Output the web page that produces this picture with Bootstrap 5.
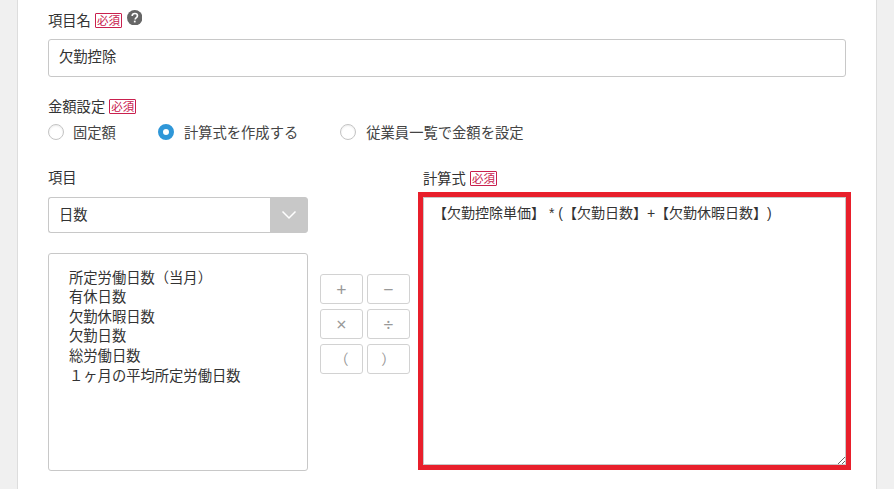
<!DOCTYPE html>
<html lang="ja">
<head>
<meta charset="utf-8">
<title>項目設定</title>
<link rel="stylesheet" href="https://cdn.jsdelivr.net/npm/bootstrap@5.3.0/dist/css/bootstrap.min.css">
<style>
html,body{height:489px;overflow:hidden}
body{background:#f0f0f0;font-family:"Noto Sans CJK JP","Noto Sans",sans-serif;font-size:14.3px;color:#333;line-height:1.4}
.sheet{margin:0 17px;height:489px;background:#fff;border-left:1px solid #ddd;border-right:1px solid #ddd;padding:10px 30px 0 30px;overflow:hidden}
.fld-label{font-size:14.3px;line-height:20px;margin:0;display:flex;align-items:center;gap:4px}
.req{border:1px solid #c9204e;color:#c9204e;font-size:11.5px;line-height:13px;padding:0 1px;border-radius:1px;height:15px;font-family:"Noto Sans CJK JP",serif}
.help{width:15.500px;height:15.500px;margin:-5px 0 0 1px;flex:none}
.name-input.form-control{height:38px;border:1px solid #c8c8c8;border-radius:3px;font-size:14.3px;color:#333;padding:0 10px 5px;margin-top:9px;box-shadow:none}
.amount{margin-top:19px}
.radios{display:flex;margin-top:6px;height:20px}
.radio-item{display:flex;align-items:center;margin:0;padding:0;color:#444}
.radio-item .form-check-input{width:16px;height:16px;margin:0 10px 0 0;border:1px solid #c4c4c4;float:none;flex:none;box-shadow:inset 0 1px 2px rgba(0,0,0,.08)}
.radio-item .form-check-input:checked{background:#fff;border:5px solid #2f97d8;box-shadow:none}
.radio-first .form-check-input{margin-right:9px}
.gap-a{margin-right:42px}
.gap-b{margin-right:42px}
.work{display:flex;margin-top:20px}
.left-col{width:260px;flex:none;padding-top:0}
.top-label{margin-top:5px}
.pick.input-group{margin-top:10px;width:260px;height:36px}
.pick .form-select{background-image:none;border:1px solid #c8c8c8;border-right:0;border-radius:3px 0 0 3px;font-size:14.3px;color:#333;padding:0 10px 2px;height:36px;box-shadow:none}
.pick .input-group-text{width:39px;padding:0;justify-content:center;background:#c8c8c8;border:1px solid #c8c8c8;border-radius:0 3px 3px 0}
.var-list{margin:20px 0 0;width:260px;height:218px;border:1px solid #c8c8c8;border-radius:3px;padding:12.700px 20px;list-style:none;line-height:19.6px;color:#333}
.ops{width:90px;flex:none;margin:112px 0 0 12px;display:grid;grid-template-columns:43px 43px;grid-auto-rows:30px;column-gap:4px;row-gap:5px;align-content:start}
.ops .btn{padding:0;border:1px solid #d2d2d2;border-radius:3px;background:#fff;color:#999;font-size:18px;line-height:1;font-family:"Noto Sans","Liberation Sans",sans-serif}
.ops .btn.paren{font-family:"Noto Sans CJK JP",sans-serif;font-size:14.3px}
.right-col{width:433px;flex:none;margin-left:8px;margin-top:6px}
.right-col .fld-label{padding-left:5px;margin-top:0}
.formula.form-control{display:block;width:433px;height:278px;margin-top:4px;border:5px solid #e81f2b;border-radius:0;padding:6px 10px;font-family:"Liberation Sans","Noto Sans CJK JP",sans-serif;font-size:14px;line-height:20px;text-spacing-trim:space-all;font-feature-settings:"chws" 0;color:#333;box-shadow:inset 0 0 0 1px #c8c8c8;background:#fff;resize:both}
</style>
</head>
<body>
<main class="sheet">
  <div class="fld-label">項目名 <span class="req">必須</span>
    <svg class="help" viewBox="0 0 16 16" role="img" aria-label="ヘルプ"><circle cx="8" cy="8" r="8" fill="#666"/><path d="M5.300 6.200C5.400 4.600 6.500 3.600 8.100 3.600c1.600 0 2.700 1 2.700 2.300 0 1-.5 1.600-1.400 2.200-.7.500-.9.800-.9 1.500v.3" fill="none" stroke="#fff" stroke-width="1.700"/><rect x="7.100" y="11" width="1.800" height="1.800" fill="#fff"/></svg>
  </div>
  <input class="form-control name-input" type="text" value="欠勤控除">

  <div class="amount fld-label">金額設定 <span class="req">必須</span></div>
  <div class="radios">
    <label class="radio-item radio-first gap-a"><input class="form-check-input" type="radio" name="amt">固定額</label>
    <label class="radio-item gap-b"><input class="form-check-input" type="radio" name="amt" checked>計算式を作成する</label>
    <label class="radio-item"><input class="form-check-input" type="radio" name="amt">従業員一覧で金額を設定</label>
  </div>

  <div class="work">
    <div class="left-col">
      <div class="fld-label top-label">項目</div>
      <div class="input-group pick">
        <select class="form-select"><option>日数</option></select>
        <span class="input-group-text"><svg width="16" height="10" viewBox="0 0 16 10"><path d="M1.500 1.500 8 8l6.500-6.500" fill="none" stroke="#fff" stroke-width="1.500"/></svg></span>
      </div>
      <ul class="var-list">
        <li>所定労働日数（当月）</li>
        <li>有休日数</li>
        <li>欠勤休暇日数</li>
        <li>欠勤日数</li>
        <li>総労働日数</li>
        <li>１ヶ月の平均所定労働日数</li>
      </ul>
    </div>
    <div class="ops">
      <button class="btn" type="button">+</button>
      <button class="btn" type="button">−</button>
      <button class="btn" type="button">×</button>
      <button class="btn" type="button">÷</button>
      <button class="btn paren" type="button">（</button>
      <button class="btn paren" type="button">）</button>
    </div>
    <div class="right-col">
      <div class="fld-label">計算式 <span class="req">必須</span></div>
      <textarea class="form-control formula">【欠勤控除単価】 * (【欠勤日数】+【欠勤休暇日数】)</textarea>
    </div>
  </div>
</main>
<script src="https://cdn.jsdelivr.net/npm/bootstrap@5.3.0/dist/js/bootstrap.bundle.min.js"></script>
</body>
</html>
